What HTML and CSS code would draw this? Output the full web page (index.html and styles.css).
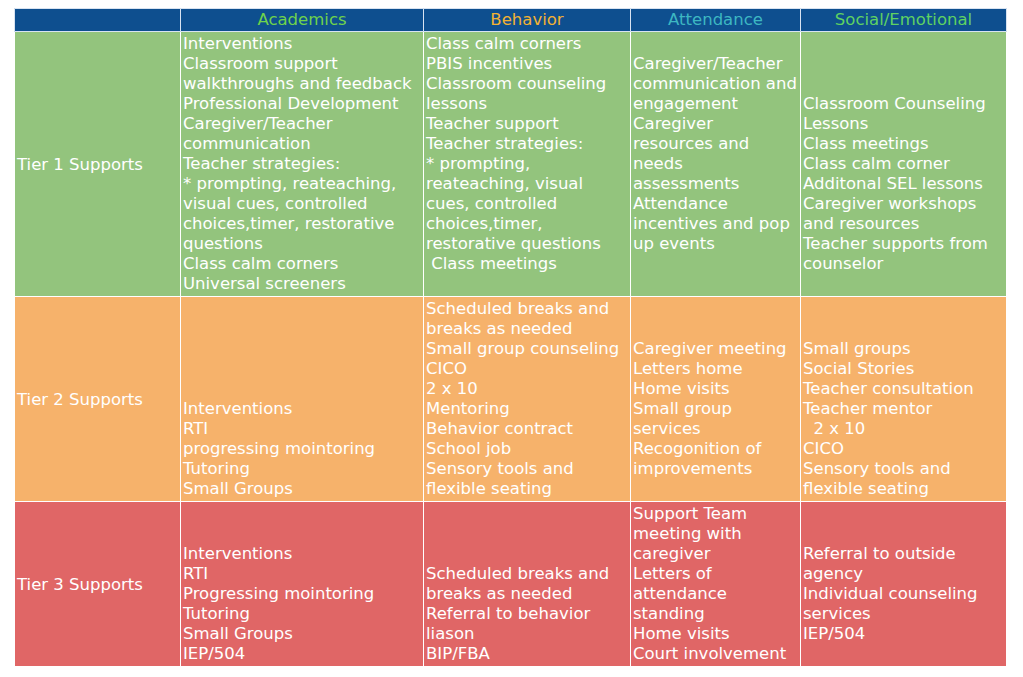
FILE: index.html
```html
<!DOCTYPE html>
<html lang="en">
<head>
<meta charset="utf-8">
<title>Tiered Supports</title>
<link rel="stylesheet" href="styles.css">
</head>
<body>
<table class="tiers">
  <colgroup>
    <col class="c-label">
    <col class="c-acad">
    <col class="c-beh">
    <col class="c-att">
    <col class="c-soc">
  </colgroup>
  <thead>
    <tr class="head">
      <th></th>
      <th class="h-acad">Academics</th>
      <th class="h-beh">Behavior</th>
      <th class="h-att">Attendance</th>
      <th class="h-soc">Social/Emotional</th>
    </tr>
  </thead>
  <tbody>
    <tr class="tier tier1">
      <td class="label">Tier 1 Supports</td>
      <td>Interventions<br>Classroom support<br>walkthroughs and feedback<br>Professional Development<br>Caregiver/Teacher<br>communication<br>Teacher strategies:<br>* prompting, reateaching,<br>visual cues, controlled<br>choices,timer, restorative<br>questions<br>Class calm corners<br>Universal screeners</td>
      <td>Class calm corners<br>PBIS incentives<br>Classroom counseling<br>lessons<br>Teacher support<br>Teacher strategies:<br>* prompting,<br>reateaching, visual<br>cues, controlled<br>choices,timer,<br>restorative questions<br>&nbsp;Class meetings</td>
      <td class="skip1">Caregiver/Teacher<br>communication and<br>engagement<br>Caregiver<br>resources and<br>needs<br>assessments<br>Attendance<br>incentives and pop<br>up events</td>
      <td class="skip3">Classroom Counseling<br>Lessons<br>Class meetings<br>Class calm corner<br>Additonal SEL lessons<br>Caregiver workshops<br>and resources<br>Teacher supports from<br>counselor</td>
    </tr>
    <tr class="tier tier2">
      <td class="label">Tier 2 Supports</td>
      <td class="skip5">Interventions<br>RTI<br>progressing mointoring<br>Tutoring<br>Small Groups</td>
      <td>Scheduled breaks and<br>breaks as needed<br>Small group counseling<br>CICO<br>2 x 10<br>Mentoring<br>Behavior contract<br>School job<br>Sensory tools and<br>flexible seating</td>
      <td class="skip2">Caregiver meeting<br>Letters home<br>Home visits<br>Small group<br>services<br>Recogonition of<br>improvements</td>
      <td class="skip2">Small groups<br>Social Stories<br>Teacher consultation<br>Teacher mentor<br>&nbsp;&nbsp;2 x 10<br>CICO<br>Sensory tools and<br>flexible seating</td>
    </tr>
    <tr class="tier tier3">
      <td class="label">Tier 3 Supports</td>
      <td class="skip2">Interventions<br>RTI<br>Progressing mointoring<br>Tutoring<br>Small Groups<br>IEP/504</td>
      <td class="skip3">Scheduled breaks and<br>breaks as needed<br>Referral to behavior<br>liason<br>BIP/FBA</td>
      <td>Support Team<br>meeting with<br>caregiver<br>Letters of<br>attendance<br>standing<br>Home visits<br>Court involvement</td>
      <td class="skip2">Referral to outside<br>agency<br>Individual counseling<br>services<br>IEP/504</td>
    </tr>
  </tbody>
</table>
</body>
</html>
```

FILE: styles.css
```css
html, body {
  margin: 0;
  padding: 0;
  background: #ffffff;
}

body {
  padding: 8px 0 0 14px;
  font-family: "DejaVu Sans", "Liberation Sans", sans-serif;
  font-size: 16.5px;
  color: #ffffff;
}

.tiers {
  border-collapse: collapse;
  table-layout: fixed;
  width: 992px;
}

.c-label { width: 166px; }
.c-acad { width: 243px; }
.c-beh { width: 207px; }
.c-att { width: 170px; }
.c-soc { width: 206px; }

.tiers th,
.tiers td {
  border: 1px solid rgba(255, 255, 255, 0.45);
  padding: 2px 2px;
  line-height: 20px;
  text-align: left;
  vertical-align: top;
  white-space: nowrap;
  overflow: hidden;
}

.head th {
  background: #0e4f8f;
  height: 19px;
  padding: 1px 2px;
  text-align: center;
  vertical-align: middle;
  font-weight: normal;
  line-height: 20px;
  border-color: rgba(200, 215, 235, 0.7);
}

.h-acad { color: #6fd34b; }
.h-beh { color: #f2b233; }
.h-att { color: #3db7c2; }
.h-soc { color: #5fd262; }

.tier1 td { background: #93c47d; }
.tier2 td { background: #f6b26b; }
.tier3 td { background: #e06666; }

.tiers td.label {
  vertical-align: middle;
  padding-left: 2px;
  padding-top: 4px;
}

.tiers td.skip1 { padding-top: 22px; }
.tiers td.skip2 { padding-top: 42px; }
.tiers td.skip3 { padding-top: 62px; }
.tiers td.skip5 { padding-top: 102px; }
```
